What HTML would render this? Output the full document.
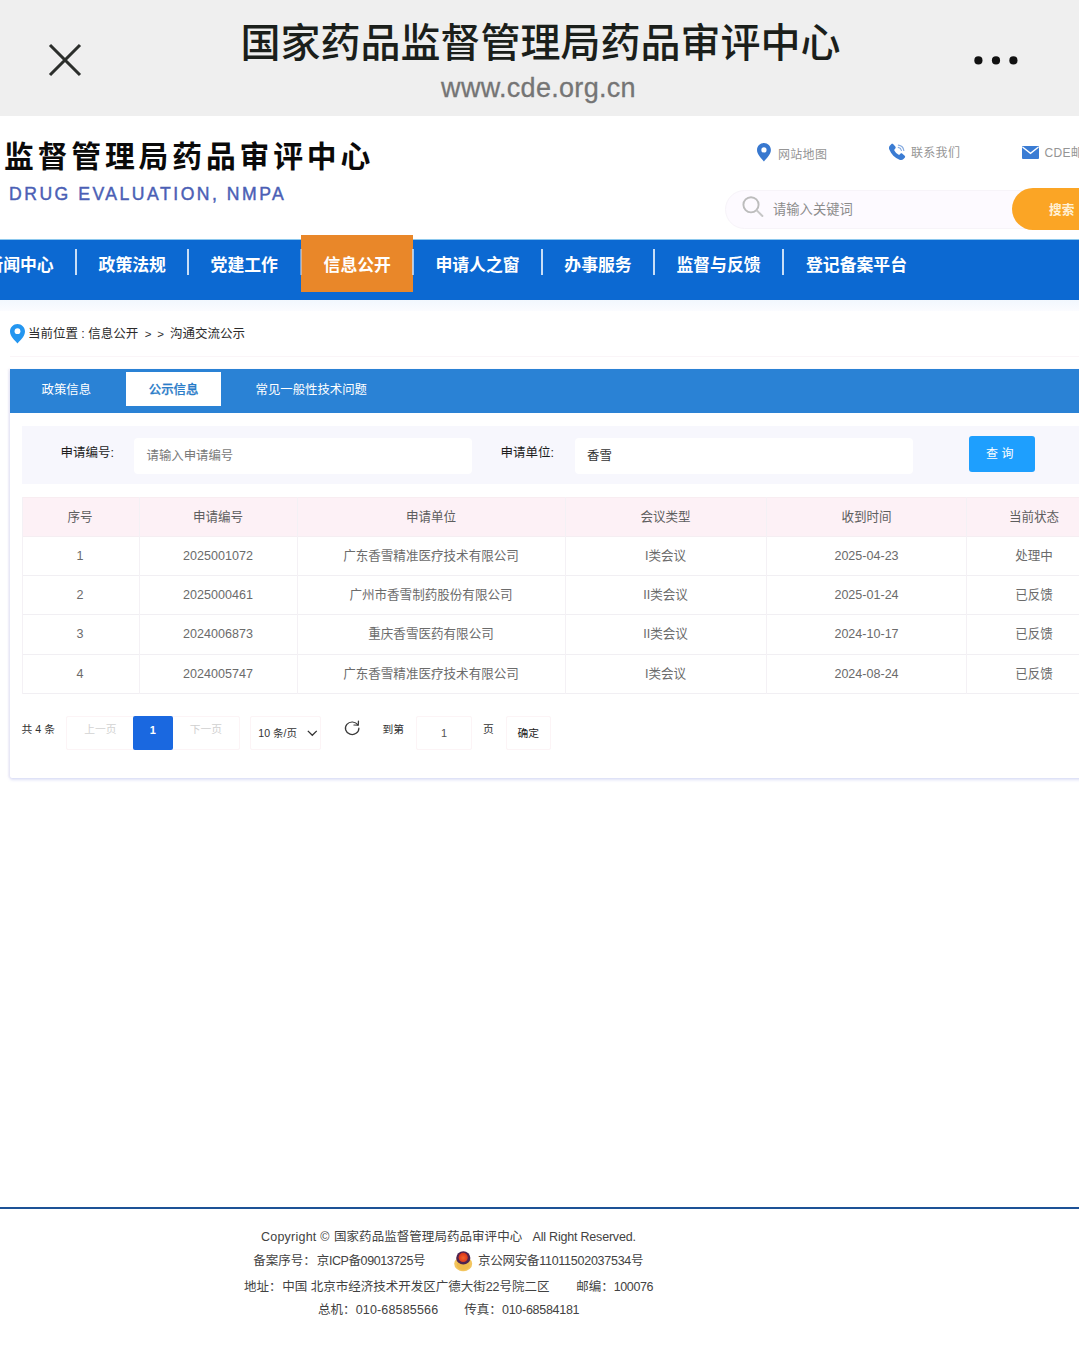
<!DOCTYPE html>
<html lang="zh-CN">
<head>
<meta charset="utf-8">
<title>国家药品监督管理局药品审评中心</title>
<style>
html,body{margin:0;padding:0;}
body{width:1079px;height:1349px;position:relative;overflow:hidden;background:#fff;
  font-family:"Liberation Sans","Noto Sans CJK SC",sans-serif;color:#333;}
.a{position:absolute;white-space:nowrap;margin:0;padding:0;}
.c{text-align:center;}
svg{position:absolute;overflow:visible;}

/* browser bar */
#bar{left:0;top:0;width:1079px;height:116px;background:#efefef;}
#bar-title{left:0;top:14px;width:1081px;height:58px;line-height:58px;font-size:40px;font-weight:500;color:#1b1f1b;text-align:center;}
#bar-url{left:0;top:70px;width:1077px;height:36px;line-height:36px;font-size:27px;letter-spacing:.3px;color:#757575;-webkit-text-stroke:.3px #757575;text-align:center;}

/* site header */
#site-title{left:4px;top:135px;height:44px;line-height:44px;font-size:29.8px;font-weight:bold;letter-spacing:3.85px;color:#0a0a0a;}
#site-en{left:9px;top:182.3px;height:24px;line-height:24px;font-size:17.6px;letter-spacing:2.5px;color:#4b5fb5;-webkit-text-stroke:.45px #4b5fb5;}
.toplink{font-size:12px;color:#959595;height:18px;line-height:18px;letter-spacing:.3px;}
#search{left:725px;top:189.5px;width:420px;height:39px;border:1px solid #f7f4f9;border-radius:21px;background:#fdfaff;box-sizing:border-box;}
#search-ph{left:773px;top:200.2px;height:20px;line-height:20px;font-size:13.3px;color:#8c8c8c;}
#search-btn{left:1011.7px;top:188.3px;width:120px;height:41.7px;border-radius:21px;background:#fba525;}
#search-btn-t{left:1049px;top:200px;height:20px;line-height:20px;font-size:12.7px;color:#fff1d6;font-weight:bold;}

/* nav */
#nav-line{left:0;top:239px;width:1079px;height:1px;background:#8cc8ee;}
#nav{left:0;top:240px;width:1079px;height:60px;background:#0c69d2;}
#nav-after{left:0;top:300px;width:1079px;height:11px;background:linear-gradient(#f2f7fe,#fbfcff);}
#nav-active{left:301.2px;top:235.2px;width:112.1px;height:56.5px;background:#e98729;}
.nv{top:253.5px;height:24px;line-height:24px;font-size:16.85px;font-weight:bold;color:#fff;text-align:center;}
.sep{top:248.8px;width:1.9px;height:25.8px;margin-left:-.3px;background:#c9def6;}

/* breadcrumb */
#crumb,.cr{top:323.5px;height:20px;line-height:20px;font-size:12.5px;color:#2b2b2b;}
#crumb{left:27.9px;}

/* panel */
#panel-top{left:10px;top:356px;width:1075px;height:1px;background:#faf5f8;}
#panel{left:10px;top:369px;width:1100px;height:409px;background:#fff;border-radius:0 0 0 2px;
  box-shadow:0 2px 3px rgba(125,135,220,.26),-1.5px 0 2px rgba(160,150,210,.13);}
#tabs{left:10px;top:368.7px;width:1075px;height:44.7px;background:#2a82d5;}
#tab-on{left:125.6px;top:372.1px;width:95.8px;height:34.3px;background:#fff;}
.tb{top:379.5px;height:20px;line-height:20px;font-size:12.4px;color:#fff;}

#srow{left:22px;top:426px;width:1075px;height:58px;background:#f7f7fd;}
.inp{top:437.5px;height:36.5px;background:#fff;border-radius:4px;}
.lab{top:442.5px;height:20px;line-height:20px;font-size:12.5px;color:#1c1c1c;}
.ph{top:445.5px;height:20px;line-height:20px;font-size:12.4px;}
#qbtn{left:969px;top:436.3px;width:65.6px;height:35.7px;border-radius:3px;background:#1e9ffe;}
#qbtn-t{left:967px;top:443.8px;width:65.5px;height:20px;line-height:20px;font-size:12px;color:#fff;text-align:center;}

/* table */
#thead{left:22px;top:497.2px;width:1075px;height:38.8px;background:#fdf1f6;}
.hl{left:22px;width:1075px;height:1px;background:#f1eff3;}
.vl{top:497px;width:1px;height:196.5px;background:#f4f1f5;}
.th,.td{height:20px;line-height:20px;font-size:12.55px;text-align:center;}
.th{color:#5e5e5e;}
.td{color:#6b6b6b;}

/* pager */
.pg{font-size:10.75px;height:18px;line-height:18px;}
.box{top:716px;height:33.5px;box-sizing:border-box;border:1px solid #fcf4f6;border-radius:2px;background:#fff;}

/* footer */
#fline{left:0;top:1206.5px;width:1079px;height:2.8px;background:#1d5296;}
.ft{height:20px;line-height:20px;font-size:12.5px;color:#424242;}
</style>
</head>
<body>

<!-- ===== in-app browser bar ===== -->
<div id="bar" class="a"></div>
<svg style="left:49px;top:44px" width="32" height="32" viewBox="0 0 32 32"><path d="M1 1 L31 31 M31 1 L1 31" stroke="#2b2e2b" stroke-width="3.1" fill="none"/></svg>
<div id="bar-title" class="a">国家药品监督管理局药品审评中心</div>
<div id="bar-url" class="a">www.cde.org.cn</div>
<svg style="left:974px;top:56px" width="44" height="9" viewBox="0 0 44 9"><circle cx="4.4" cy="4.4" r="4.1" fill="#111"/><circle cx="22" cy="4.4" r="4.1" fill="#111"/><circle cx="39.4" cy="4.4" r="4.1" fill="#111"/></svg>

<!-- ===== site header ===== -->
<div id="site-title" class="a">监督管理局药品审评中心</div>
<div id="site-en" class="a">DRUG EVALUATION, NMPA</div>

<svg style="left:756.600px;top:143.300px" width="13.900" height="18.400" viewBox="0 0 13.900 18.400"><path d="M6.950 0C3.100 0 0 3.100 0 6.900c0 4.500 4.500 8.500 6.950 11.500 2.450-3 6.950-7 6.950-11.500C13.900 3.100 10.800 0 6.950 0z" fill="#3878cf"/><circle cx="6.950" cy="6.900" r="2.600" fill="#fff"/></svg>
<div class="a toplink" style="left:778px;top:146px">网站地图</div>
<svg style="left:888px;top:143px" width="18" height="18" viewBox="0 0 18 18"><path d="M3.200 1.300c.6-.6 1.500-.6 2.100 0l2 2.300c.5.600.5 1.400 0 2L6.100 6.900c1 2.100 2.900 4 5 5l1.300-1.200c.6-.5 1.400-.5 2 0l2.300 2c.6.600.6 1.500 0 2.100l-1.200 1.300c-1 1-2.600 1.200-4 .6C6.800 14.900 3.100 11.200 1.300 6.500.7 5.100 1 3.500 2 2.500z" fill="#3b7cd3"/><path d="M10.300 4.400c1.600.3 2.800 1.500 3.100 3.100M10.400 2.100c3 .4 5 2.500 5.400 5.400" stroke="#86abe0" stroke-width="1.200" fill="none" stroke-linecap="round"/></svg>
<div class="a toplink" style="left:911px;top:143.500px">联系我们</div>
<svg style="left:1021.700px;top:146.300px" width="17" height="12.900" viewBox="0 0 18 13" preserveAspectRatio="none"><rect x="0" y="0" width="18" height="13" rx="1" fill="#3a7cd4"/><path d="M0.500 1 L9 7.400 L17.500 1" stroke="#fff" stroke-width="1.500" fill="none"/></svg>
<div class="a toplink" style="left:1044.500px;top:143.500px">CDE邮箱</div>

<div id="search" class="a"></div>
<svg style="left:742px;top:195.500px" width="22" height="22" viewBox="0 0 22 22"><circle cx="9" cy="8.800" r="7.600" stroke="#bcbcbc" stroke-width="1.900" fill="none"/><path d="M15 14.600 L20.400 20" stroke="#c6c6c6" stroke-width="2" stroke-linecap="round"/></svg>
<div id="search-ph" class="a">请输入关键词</div>
<div id="search-btn" class="a"></div>
<div id="search-btn-t" class="a">搜索</div>

<!-- ===== main nav ===== -->
<div id="nav-line" class="a"></div>
<div id="nav" class="a"></div>
<div id="nav-after" class="a"></div>
<div id="nav-active" class="a"></div>
<div class="a nv" style="left:-36px;width:112px">新闻中心</div>
<div class="a sep" style="left:75.500px"></div>
<div class="a nv" style="left:76px;width:112.500px">政策法规</div>
<div class="a sep" style="left:187.500px"></div>
<div class="a nv" style="left:188px;width:112.500px">党建工作</div>
<div class="a sep" style="left:300px;opacity:.5"></div>
<div class="a nv" style="left:301px;width:112.500px">信息公开</div>
<div class="a sep" style="left:412.700px;opacity:.8;width:1.2px"></div>
<div class="a nv" style="left:413px;width:129px">申请人之窗</div>
<div class="a sep" style="left:541.200px"></div>
<div class="a nv" style="left:542px;width:112px">办事服务</div>
<div class="a sep" style="left:653.300px"></div>
<div class="a nv" style="left:654px;width:129px">监督与反馈</div>
<div class="a sep" style="left:782.300px"></div>
<div class="a nv" style="left:783px;width:147px">登记备案平台</div>

<!-- ===== breadcrumb ===== -->
<svg style="left:10.100px;top:324.400px" width="15" height="19.400" viewBox="0 0 15 19.400"><path d="M7.500 0C3.400 0 0 3.300 0 7.400c0 4.900 5 9 7.500 12 2.500-3 7.500-7.100 7.500-12C15 3.300 11.600 0 7.500 0z" fill="#2496f0"/><circle cx="7.500" cy="7.200" r="2.900" fill="#fff"/></svg>
<div id="crumb" class="a">当前位置 : 信息公开</div>
<div class="a cr" style="left:144.800px;font-size:11.5px">&gt;</div>
<div class="a cr" style="left:157.300px;font-size:11.5px">&gt;</div>
<div class="a cr" style="left:170px">沟通交流公示</div>

<!-- ===== content panel ===== -->
<div id="panel-top" class="a"></div>
<div id="panel" class="a"></div>
<div id="tabs" class="a"></div>
<div id="tab-on" class="a"></div>
<div class="a tb" style="left:41.500px">政策信息</div>
<div class="a tb" style="left:148.800px;color:#2a7cc8;font-weight:500;-webkit-text-stroke:.25px #2a7cc8">公示信息</div>
<div class="a tb" style="left:255.500px">常见一般性技术问题</div>

<div id="srow" class="a"></div>
<div class="a lab" style="left:60.500px">申请编号:</div>
<div class="a inp" style="left:134.300px;width:338px"></div>
<div class="a ph" style="left:146.500px;color:#7a7a7a">请输入申请编号</div>
<div class="a lab" style="left:500.500px">申请单位:</div>
<div class="a inp" style="left:575px;width:338.300px"></div>
<div class="a ph" style="left:587px;color:#333">香雪</div>
<div id="qbtn" class="a"></div>
<div id="qbtn-t" class="a">查 询</div>

<!-- table -->
<div id="thead" class="a"></div>
<div class="a hl" style="top:496.700px;background:#f8edf1"></div>
<div class="a hl" style="top:535.800px;background:#f5eef2"></div>
<div class="a hl" style="top:574.500px"></div>
<div class="a hl" style="top:613.700px"></div>
<div class="a hl" style="top:653.500px"></div>
<div class="a hl" style="top:692.500px"></div>
<div class="a vl" style="left:21.500px"></div>
<div class="a vl" style="left:138.500px"></div>
<div class="a vl" style="left:297px"></div>
<div class="a vl" style="left:564.500px"></div>
<div class="a vl" style="left:765.500px"></div>
<div class="a vl" style="left:966px"></div>

<div class="a th" style="left:22px;width:116px;top:507px">序号</div>
<div class="a th" style="left:138px;width:160px;top:507px">申请编号</div>
<div class="a th" style="left:297px;width:268px;top:507px">申请单位</div>
<div class="a th" style="left:565px;width:201px;top:507px">会议类型</div>
<div class="a th" style="left:766px;width:201px;top:507px">收到时间</div>
<div class="a th" style="left:967px;width:134px;top:507px">当前状态</div>

<div class="a td" style="left:22px;width:116px;top:545.500px">1</div>
<div class="a td" style="left:138px;width:160px;top:545.500px">2025001072</div>
<div class="a td" style="left:297px;width:268px;top:545.500px">广东香雪精准医疗技术有限公司</div>
<div class="a td" style="left:565px;width:201px;top:545.500px">I类会议</div>
<div class="a td" style="left:766px;width:201px;top:545.500px">2025-04-23</div>
<div class="a td" style="left:967px;width:134px;top:545.500px">处理中</div>

<div class="a td" style="left:22px;width:116px;top:584.500px">2</div>
<div class="a td" style="left:138px;width:160px;top:584.500px">2025000461</div>
<div class="a td" style="left:297px;width:268px;top:584.500px">广州市香雪制药股份有限公司</div>
<div class="a td" style="left:565px;width:201px;top:584.500px">II类会议</div>
<div class="a td" style="left:766px;width:201px;top:584.500px">2025-01-24</div>
<div class="a td" style="left:967px;width:134px;top:584.500px">已反馈</div>

<div class="a td" style="left:22px;width:116px;top:623.500px">3</div>
<div class="a td" style="left:138px;width:160px;top:623.500px">2024006873</div>
<div class="a td" style="left:297px;width:268px;top:623.500px">重庆香雪医药有限公司</div>
<div class="a td" style="left:565px;width:201px;top:623.500px">II类会议</div>
<div class="a td" style="left:766px;width:201px;top:623.500px">2024-10-17</div>
<div class="a td" style="left:967px;width:134px;top:623.500px">已反馈</div>

<div class="a td" style="left:22px;width:116px;top:663.7px">4</div>
<div class="a td" style="left:138px;width:160px;top:663.7px">2024005747</div>
<div class="a td" style="left:297px;width:268px;top:663.7px">广东香雪精准医疗技术有限公司</div>
<div class="a td" style="left:565px;width:201px;top:663.7px">I类会议</div>
<div class="a td" style="left:766px;width:201px;top:663.7px">2024-08-24</div>
<div class="a td" style="left:967px;width:134px;top:663.7px">已反馈</div>

<!-- pager -->
<div class="a pg" style="left:21.500px;top:719.800px;color:#333">共 4 条</div>
<div class="a box" style="left:66px;width:173.500px"></div>
<div class="a pg c" style="left:67.500px;width:66px;top:719.800px;color:#d2d2d2">上一页</div>
<div class="a" style="left:132.500px;top:716px;width:40.300px;height:34px;background:#1a68e0;border-radius:2px"></div>
<div class="a pg c" style="left:132.500px;width:40.500px;top:720.800px;color:#fff;font-weight:bold;font-size:11px">1</div>
<div class="a pg c" style="left:173px;width:66px;top:719.800px;color:#d0d0d0">下一页</div>
<div class="a box" style="left:250.200px;width:71px"></div>
<div class="a pg" style="left:258.300px;top:724.200px;color:#333;font-size:10.55px">10 条/页</div>
<svg style="left:306.800px;top:730.300px" width="10.600" height="6.500" viewBox="0 0 11 7"><path d="M0.700 0.900 L5.500 5.700 L10.300 0.900" stroke="#333" stroke-width="1.400" fill="none"/></svg>
<svg style="left:344.200px;top:720.300px" width="16.300" height="15.200" viewBox="0 0 16 16" preserveAspectRatio="none"><path d="M13.600 5.200A6.600 6.600 0 1 0 14.600 8.600" stroke="#3a3a3a" stroke-width="1.250" fill="none" stroke-linecap="round"/><path d="M14.200 1.200 L14 5.500 L9.800 5.300" stroke="#3a3a3a" stroke-width="1.250" fill="none" stroke-linecap="round" stroke-linejoin="round"/></svg>
<div class="a pg" style="left:382.500px;top:719.800px;color:#333">到第</div>
<div class="a box" style="left:415.700px;width:56.600px"></div>
<div class="a pg c" style="left:415.700px;width:56.600px;top:724px;color:#555;font-size:11px">1</div>
<div class="a pg" style="left:483px;top:719.800px;color:#333">页</div>
<div class="a box" style="left:505.700px;width:45px"></div>
<div class="a pg c" style="left:505.700px;width:45px;top:724px;color:#222">确定</div>

<!-- ===== footer ===== -->
<div id="fline" class="a"></div>
<div class="a ft" style="left:261px;top:1227.0px;letter-spacing:.23px">Copyright ©</div>
<div class="a ft" style="left:334px;top:1227.0px;letter-spacing:.05px">国家药品监督管理局药品审评中心</div>
<div class="a ft" style="left:532.500px;top:1227.0px;letter-spacing:-.2px">All Right Reserved.</div>
<div class="a ft" style="left:253.300px;top:1250.9px">备案序号：</div>
<div class="a ft" style="left:316.800px;top:1250.9px;letter-spacing:-.41px">京ICP备09013725号</div>
<svg style="left:453.900px;top:1250.500px" width="18.700" height="20.500" viewBox="0 0 18.700 20.500"><defs><radialGradient id="bg1" cx="50%" cy="55%" r="55%"><stop offset="0" stop-color="#f4622a"/><stop offset="1" stop-color="#d8321a"/></radialGradient></defs><ellipse cx="9.200" cy="12.700" rx="9" ry="7.500" fill="#f3c55e"/><ellipse cx="9.200" cy="14" rx="6.500" ry="5" fill="#f0bb4c"/><ellipse cx="9.300" cy="6.900" rx="7.100" ry="6.600" fill="#4e2450"/><circle cx="9.200" cy="6.400" r="4.600" fill="url(#bg1)"/></svg>
<div class="a ft" style="left:478px;top:1250.9px;letter-spacing:-.26px">京公网安备11011502037534号</div>
<div class="a ft" style="left:244px;top:1277.0px">地址：</div>
<div class="a ft" style="left:282.200px;top:1277.0px">中国 北京市经济技术开发区广德大街22号院二区</div>
<div class="a ft" style="left:576.200px;top:1277.0px">邮编：</div>
<div class="a ft" style="left:613.700px;top:1277.0px;letter-spacing:-.38px">100076</div>
<div class="a ft" style="left:318px;top:1299.5px">总机：</div>
<div class="a ft" style="left:355.700px;top:1299.5px;letter-spacing:.16px">010-68585566</div>
<div class="a ft" style="left:464.300px;top:1299.5px">传真：</div>
<div class="a ft" style="left:502px;top:1299.5px;letter-spacing:-.28px">010-68584181</div>

</body>
</html>
